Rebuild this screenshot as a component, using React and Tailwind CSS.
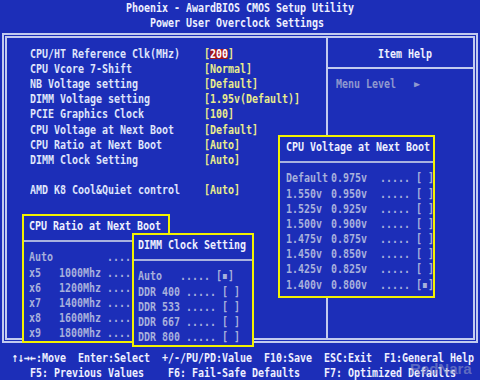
import React from 'react';

// BIOS text: DejaVu Sans Mono squeezed to a 6px character cell
function T({ children, className = '' }) {
  return (
    <span className={`inline-block whitespace-pre origin-left [transform:scaleX(0.7667)] ${className}`}>
      {children}
    </span>
  );
}

function Row({ children, className = '' }) {
  return <div className={`flex h-[15.2px] leading-[15.2px] ${className}`}>{children}</div>;
}

const settings = [
  ['CPU/HT Reference Clk(MHz)', null],
  ['CPU Vcore 7-Shift', '[Normal]'],
  ['NB Voltage setting', '[Default]'],
  ['DIMM Voltage setting', '[1.95v(Default)]'],
  ['PCIE Graphics Clock', '[100]'],
  ['CPU Voltage at Next Boot', '[Default]'],
  ['CPU Ratio at Next Boot', '[Auto]'],
  ['DIMM Clock Setting', '[Auto]'],
];

const voltages = [
  ['Default', '0.975v', '[ ]'],
  ['1.550v', '0.950v', '[ ]'],
  ['1.525v', '0.925v', '[ ]'],
  ['1.500v', '0.900v', '[ ]'],
  ['1.475v', '0.875v', '[ ]'],
  ['1.450v', '0.850v', '[ ]'],
  ['1.425v', '0.825v', '[ ]'],
  ['1.400v', '0.800v', '[▪]'],
];

const ratios = [
  'Auto         .....',
  'x5   1000Mhz .....',
  'x6   1200Mhz .....',
  'x7   1400Mhz .....',
  'x8   1600Mhz .....',
  'x9   1800Mhz .....',
];

const dimm = ['Auto   ..... [▪]', 'DDR 400 ..... [ ]', 'DDR 533 ..... [ ]', 'DDR 667 ..... [ ]', 'DDR 800 ..... [ ]'];

function Popup({ title, className = '', padLeft, children }) {
  return (
    <div className={`absolute border-2 border-[#f2f200] bg-[#1c2eb8] ${className}`}>
      <Row className={`mt-[2.4px] ${padLeft}`}>
        <T className="text-[#eef0ff]">{title}</T>
      </Row>
      <div className="mt-[6.2px] h-[2px] bg-[#a9b2df]" />
      <div className={`mt-[7.6px] text-[#a7b0dc] ${padLeft}`}>{children}</div>
    </div>
  );
}

export default function App() {
  return (
    <div className="relative h-[380px] w-[480px] overflow-hidden bg-[#1c2eb8] font-['DejaVu_Sans_Mono',monospace] text-[13px] font-bold text-[#dfe4fb]">
      <Row className="pl-[126px]">
        <T className="text-[#eef0ff]">Phoenix - AwardBIOS CMOS Setup Utility</T>
      </Row>
      <Row className="pl-[150px]">
        <T className="text-[#eef0ff]">Power User Overclock Settings</T>
      </Row>

      <div className="ml-[1.5px] mt-[2.6px] flex h-[310.5px] w-[476.5px] border-[5px] border-double border-[#c3cbef]">
        <div className="w-[319.5px] pl-[23.5px] pt-[7.6px]">
          {settings.map(([label, value]) => (
            <Row key={label}>
              <div className="w-[174px] shrink-0">
                <T>{label}</T>
              </div>
              {value ? (
                <T className="text-[#e9ec8c]">{value}</T>
              ) : (
                <T className="text-[#e9ec8c]">
                  [<span className="inline-block h-[10.5px] bg-[#a3161c] leading-[10.5px] text-white">200</span>]
                </T>
              )}
            </Row>
          ))}
          <Row />
          <Row>
            <div className="w-[174px] shrink-0">
              <T>AMD K8 Cool&amp;Quiet control</T>
            </div>
            <T className="text-[#e9ec8c]">[Auto]</T>
          </Row>
        </div>
        <div className="w-[2px] bg-[#c3cbef]" />
        <div className="flex-1 pt-[7.6px]">
          <Row className="pl-[50px]">
            <T className="text-[#eef0ff]">Item Help</T>
          </Row>
          <div className="mt-[6.6px] h-[2px] bg-[#c3cbef]" />
          <Row className="mt-[6.6px] pl-[8px]">
            <T className="text-[#8f98cf]">Menu Level   ►</T>
          </Row>
        </div>
      </div>

      <div className="mt-[6.1px] text-[#eef0ff]">
        <Row className="pl-[12px]">
          <T>↑↓→←:Move  Enter:Select  +/-/PU/PD:Value  F10:Save  ESC:Exit  F1:General Help</T>
        </Row>
        <Row className="pl-[30px]">
          <T>F5: Previous Values    F6: Fail-Safe Defaults    F7: Optimized Defaults</T>
        </Row>
      </div>

      <span className="absolute left-[410px] top-[360px] font-['Liberation_Sans',sans-serif] text-[15px] leading-[18px] font-bold text-[#9aa0c8]/55">
        RedNara
      </span>

      <Popup title="CPU Voltage at Next Boot" className="left-[278px] top-[135px] h-[163px] w-[157px]" padLeft="pl-[6px]">
        {voltages.map(([a, b, c]) => (
          <Row key={a}>
            <div className="w-[45px] shrink-0">
              <T>{a}</T>
            </div>
            <div className="w-[49px] shrink-0">
              <T>{b}</T>
            </div>
            <div className="w-[36px] shrink-0">
              <T>.....</T>
            </div>
            <T>{c}</T>
          </Row>
        ))}
      </Popup>

      <Popup title="CPU Ratio at Next Boot" className="left-[22px] top-[214px] h-[129px] w-[148px]" padLeft="pl-[5px]">
        {ratios.map((r) => (
          <Row key={r}>
            <T>{r}</T>
          </Row>
        ))}
      </Popup>

      <Popup title="DIMM Clock Setting" className="left-[132px] top-[233px] h-[114px] w-[122px]" padLeft="pl-[4px]">
        {dimm.map((d) => (
          <Row key={d}>
            <T>{d}</T>
          </Row>
        ))}
      </Popup>
    </div>
  );
}
